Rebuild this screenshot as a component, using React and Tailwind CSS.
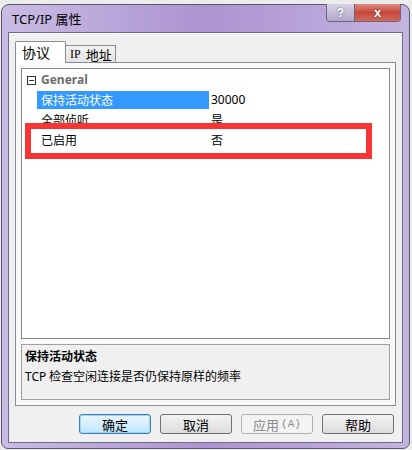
import React from "react";

const cjk = { fontFamily: '"Noto Sans CJK SC", "Noto Sans", sans-serif' };

function Btn({ children, primary, disabled }) {
  return (
    <div
      className={
        "w-[72px] h-[20px] rounded-[3px] border flex items-center justify-center text-[13px] leading-none whitespace-nowrap " +
        (primary
          ? "border-[#3c7fb1] bg-gradient-to-b from-[#eaf6fd] to-[#bee6fd] shadow-[0_0_0_1px_#9fd6f5_inset] text-black"
          : disabled
          ? "border-[#adb2b5] bg-[#f4f4f4] text-[#8a8a8a]"
          : "border-[#707070] bg-gradient-to-b from-[#f4f4f4] to-[#dcdcdc] text-black")
      }
      style={cjk}
    >
      {children}
    </div>
  );
}

export default function App() {
  return (
    <div className="w-[412px] h-[450px] bg-[#ececec] relative overflow-hidden">
      <div className="ml-[1px] mt-[4px] w-[409px] h-[445px] rounded-t-[8px] rounded-b-[7px] border border-[#5c566e] bg-gradient-to-r from-[#c9bce4] via-[#ad93d1] to-[#c4b4e0] flex flex-col relative">
        {/* title bar */}
        <div className="h-[27px] flex items-start pl-[10px] pt-[5px]">
          <span className="text-[13px] text-black leading-[18px] whitespace-nowrap" style={{ fontFamily: '"Noto Sans", "Noto Sans CJK SC", sans-serif' }}>
            TCP/IP <span style={cjk}>属性</span>
          </span>
        </div>
        {/* caption buttons */}
        <div className="absolute top-[-1px] right-[8px] flex h-[18px] rounded-b-[4px] border border-t-0 border-[#6d6580] overflow-hidden">
          <div className="w-[28px] h-full bg-gradient-to-b from-[#d9d2e6] to-[#b4a9c8] border-r border-[#6d6580] flex items-center justify-center text-[12px] font-bold text-white" style={{ fontFamily: '"Liberation Sans", sans-serif', textShadow: "0 0 2px #555" }}>?</div>
          <div className="w-[45px] h-full bg-gradient-to-b from-[#e08a80] via-[#c8473c] to-[#d2685c] flex items-center justify-center text-[13px] font-bold text-white" style={{ fontFamily: '"Liberation Sans", sans-serif', textShadow: "0 0 2px #333" }}>x</div>
        </div>

        {/* client area */}
        <div className="mx-[6px] mb-[5px] flex-1 border border-[#6f6a80] bg-[#f0f0f0] flex flex-col">
          <div className="h-[1px] bg-white/80" />
          {/* tabs */}
          <div className="pl-[6px] pt-[7px] flex items-end relative z-10">
            <div className="w-[51px] h-[22px] bg-white border border-b-0 border-[#898c95] rounded-t-[2px] flex items-center pl-[6px] text-[14px] text-black -mb-[1px] whitespace-nowrap" style={cjk}>
              协议
            </div>
            <div className="w-[50px] h-[17px] bg-gradient-to-b from-[#f4f4f4] to-[#e3e3e3] border border-l-0 border-b-0 border-[#898c95] flex items-center pl-[4px] text-[12px] text-black leading-none whitespace-nowrap" style={{ fontFamily: '"Liberation Serif", "Noto Sans CJK SC", serif' }}>
              IP<span className="ml-[5px] text-[13px]" style={cjk}>地址</span>
            </div>
          </div>
          {/* tab panel */}
          <div className="mx-[6px] h-[344px] border border-[#898c95] bg-[#f9f9f9] px-[5px] pt-[5px] flex flex-col">
            {/* property grid */}
            <div className="h-[271px] border border-[#828790] bg-white relative" style={cjk}>
              <div className="h-[20px] flex items-center mt-[1px]">
                <div className="w-[15px] flex justify-center">
                  <div className="ml-[3px] w-[9px] h-[9px] border border-[#333] flex items-center justify-center">
                    <div className="w-[5px] h-[1px] bg-[#333]" />
                  </div>
                </div>
                <span className="ml-[4px] text-[12px] font-bold text-[#6d6d6d]" style={{ fontFamily: '"Noto Sans", sans-serif' }}>General</span>
              </div>
              <div className="h-[20px] flex items-center">
                <div className="w-[15px]" />
                <div className="w-[172px] h-[18px] bg-[#3399ff] text-white text-[12px] flex items-center pl-[4px]">保持活动状态</div>
                <div className="pl-[2px] text-[12px] text-black" style={{ fontFamily: '"Noto Sans", sans-serif' }}>30000</div>
              </div>
              <div className="h-[20px] flex items-center">
                <div className="w-[15px]" />
                <div className="w-[172px] text-black text-[12px] pl-[4px]">全部侦听</div>
                <div className="pl-[2px] text-[12px] text-black">是</div>
              </div>
              <div className="h-[20px] flex items-center">
                <div className="w-[15px]" />
                <div className="w-[172px] text-black text-[12px] pl-[4px]">已启用</div>
                <div className="pl-[2px] text-[12px] text-black">否</div>
              </div>
              {/* red annotation */}
              <div className="absolute left-[3px] top-[54px] w-[347px] h-[36px] border-[6px] border-[#f73535]" />
            </div>
            {/* description */}
            <div className="mt-[5px] h-[56px] border border-[#a0a0a0] bg-[#f0f0f0] pl-[3px] pt-[1px]" style={cjk}>
              <div className="text-[12px] font-bold text-black leading-[20px]">保持活动状态</div>
              <div className="text-[12px] text-black leading-[20px]">
                <span style={{ fontFamily: '"Noto Sans", sans-serif' }}>TCP</span> 检查空闲连接是否仍保持原样的频率
              </div>
            </div>
          </div>
          {/* buttons */}
          <div className="mt-[8px] flex justify-end gap-[9px] pr-[8px]">
            <Btn primary>确定</Btn>
            <Btn>取消</Btn>
            <Btn disabled>
              应用<span className="text-[11px] ml-[2px]" style={{ fontFamily: '"Liberation Mono", monospace' }}>(A)</span>
            </Btn>
            <Btn>帮助</Btn>
          </div>
        </div>
      </div>
    </div>
  );
}
